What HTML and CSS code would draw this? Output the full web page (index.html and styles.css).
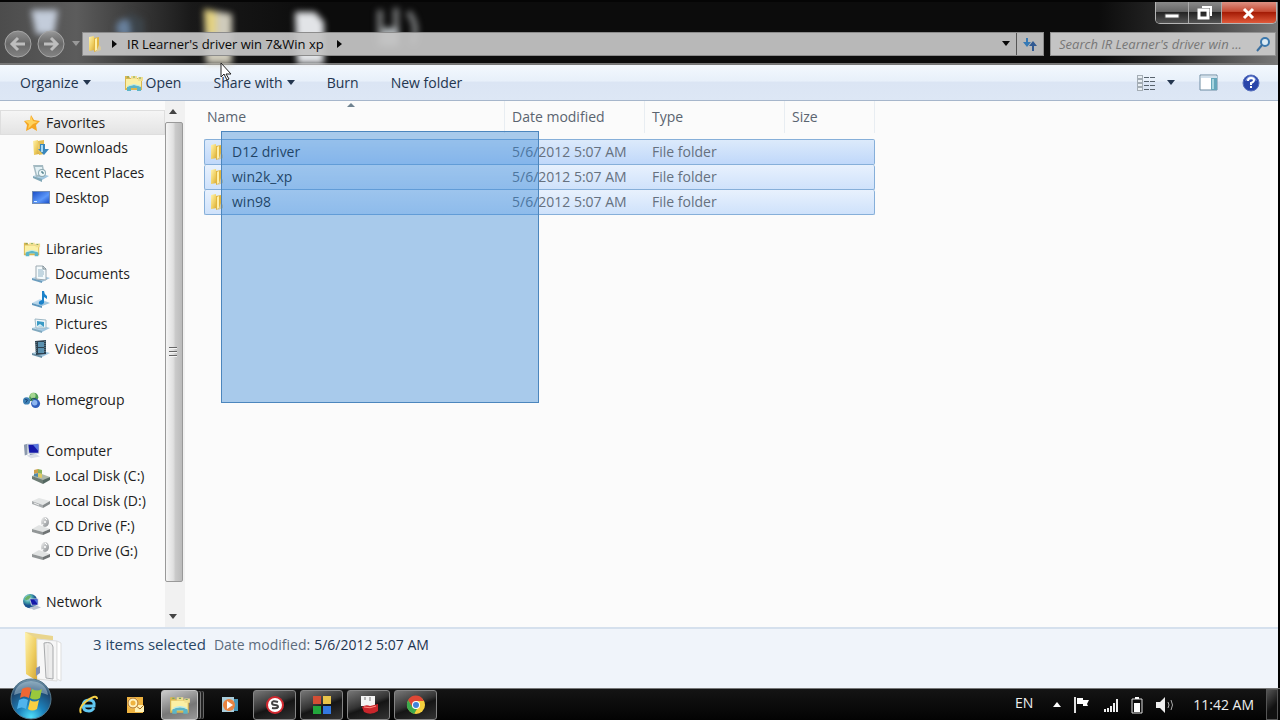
FILE: index.html
```
<!DOCTYPE html>
<html lang="en">
<head>
  <meta charset="UTF-8">
  <meta name="viewport" content="width=device-width, initial-scale=1.0">
  <title>IR Learner's driver win 7&amp;Win xp</title>
  <link rel="stylesheet" href="styles.css">
</head>
<body>
  <!-- Shared icons -->
  <svg class="sprite" aria-hidden="true">
    <defs>
      <linearGradient id="gold" x1="0" x2="1" y2="1"><stop offset="0" stop-color="#fff3b0"/><stop offset=".55" stop-color="#efcf62"/><stop offset="1" stop-color="#d2a537"/></linearGradient>
      <linearGradient id="base" x1="0" x2="1" y2="1"><stop offset="0" stop-color="#dceefa"/><stop offset="1" stop-color="#82b2d2"/></linearGradient>
      <linearGradient id="metal" x1="0" x2="1" y2="1"><stop offset="0" stop-color="#f2f2f2"/><stop offset="1" stop-color="#868a8d"/></linearGradient>
      <linearGradient id="screen" x1="0" x2="1" y2="1"><stop offset="0" stop-color="#1d50c8"/><stop offset=".6" stop-color="#5c98fa"/><stop offset="1" stop-color="#1d50c8"/></linearGradient>
      <linearGradient id="knob" x2="0" y2="1"><stop offset="0" stop-color="#9a9a9a"/><stop offset=".5" stop-color="#6c6c6c"/><stop offset="1" stop-color="#8c8c8c"/></linearGradient>
      <radialGradient id="globe" cx=".35" cy=".3"><stop offset="0" stop-color="#c8f0f5"/><stop offset=".6" stop-color="#45a3a9"/><stop offset="1" stop-color="#19528f"/></radialGradient>
      <radialGradient id="orb" cx=".5" cy=".95" r=".95"><stop offset="0" stop-color="#4fe0fb"/><stop offset=".35" stop-color="#1d83bd"/><stop offset=".75" stop-color="#1d456d"/><stop offset="1" stop-color="#7799ad"/></radialGradient>
    </defs>
    <symbol id="i-folder" viewBox="0 0 18 18">
      <path d="M3 2l5-1 1 14-6 1z" fill="url(#gold)"/>
      <path d="M8 3l5-1v13l-5 2z" fill="#e1b53f"/>
      <path d="M9 4l2-1v12l-2 1z" fill="#fff0a8"/>
      <path d="M13 10l2 2v3l-5 2z" fill="#d6c9a0"/>
    </symbol>
    <symbol id="i-star" viewBox="0 0 18 18">
      <path d="M8 1l3 5 6 1-4 4 1 6-5-3-6 3 1-6-3-4 6-1z" fill="#f5a623"/>
      <path d="M8 2l2 5 5 1-5 2-5 5 1-5-4-3 5-1z" fill="#ffd35e"/>
    </symbol>
    <symbol id="i-downloads" viewBox="0 0 18 18">
      <path d="M1 2l5-1 1 14-5 1z" fill="url(#gold)"/><path d="M6 2l6-1v14l-5 1z" fill="#e4bf55"/>
      <path d="M8 5h5v5h4l-5 6-6-6h2z" fill="#3a87bd"/><path d="M9 6h2v7H9z" fill="#a9dbf4"/>
    </symbol>
    <symbol id="i-recent" viewBox="0 0 18 18">
      <path d="M1 12l7-3 9 3-7 4z" fill="url(#base)"/><path d="M1 12l9 3v3l-9-4z" fill="#80a7b7"/>
      <path d="M1 1h10l2 11-9 1z" fill="#a4bac2"/><path d="M3 3h7l1 7-6 1z" fill="#e2f0f4"/>
      <circle cx="10" cy="9" r="4" fill="#8faab3"/><circle cx="10" cy="9" r="3" fill="#edf7f9"/><path d="M10 7v2h2" fill="none" stroke="#2c6574"/>
    </symbol>
    <symbol id="i-desktop" viewBox="0 0 18 18">
      <path d="M0 2h18v13H0z" fill="#718cb6"/><path d="M1 3h16v11H1z" fill="url(#screen)"/><path d="M2 12h3v1H2z" fill="#d7f0ff"/>
    </symbol>
    <symbol id="i-library" viewBox="0 0 20 18">
      <path d="M1 2h4l1 2h12v12H1z" fill="#d9b750"/><path d="M2 5h15v9H2z" fill="#fbf0a5"/>
      <path d="M7 2h6v3H7zM14 3h5v4h-5z" fill="#f1df91"/><path d="M3 3h2M9 3h2M15 4h2" stroke="#77a45f"/>
      <path d="M3 17v-4q7-4 14 0v4h-4v-3H7v3z" fill="#5bb5c8"/><path d="M4 12q6-3 12 0" fill="none" stroke="#b9ebee"/>
    </symbol>
    <symbol id="i-documents" viewBox="0 0 18 18">
      <path d="M0 13l8-3 10 3-8 4z" fill="url(#base)"/><path d="M0 13l10 3v2L0 15z" fill="#6c9dbe"/>
      <path d="M4 1h7l3 3v11l-10-1z" fill="#f4fafc" stroke="#9ca9b1"/><path d="M6 5h5M6 7h6M6 9h6M6 11h5" stroke="#92b3c5"/><path d="M11 1v3h3" fill="none" stroke="#75858d"/>
    </symbol>
    <symbol id="i-music" viewBox="0 0 18 18">
      <path d="M0 13l8-4 10 4-8 3z" fill="url(#base)"/><path d="M0 13l10 3v2L0 15z" fill="#5d96bc"/>
      <path d="M10 1h2q0 3 3 5v3l-3-2v6q-2 3-5 1-1-3 3-4z" fill="#1c82ca"/>
    </symbol>
    <symbol id="i-pictures" viewBox="0 0 18 18">
      <path d="M0 13l8-3 10 3-8 4z" fill="url(#base)"/><path d="M0 13l10 3v2L0 15z" fill="#80a8be"/>
      <path d="M3 4l11 1v8L4 13z" fill="#eef6fa" stroke="#9db8c5"/><path d="M5 6l7 1v5l-7-1z" fill="#3a9ac5"/><path d="M5 11l3-2 4 3z" fill="#d6edf5"/>
    </symbol>
    <symbol id="i-videos" viewBox="0 0 18 18">
      <path d="M0 13l8-3 10 3-8 4z" fill="url(#base)"/><path d="M0 13l10 3v2L0 15z" fill="#688ea4"/>
      <path d="M3 1l11-1v14l-10 1z" fill="#2c4150"/><path d="M6 2h6v5H6zM6 8h6v5H6z" fill="#5b91af"/><path d="M4 2v12M13 1v12" stroke="#7f979f" stroke-dasharray="1 1"/>
    </symbol>
    <symbol id="i-homegroup" viewBox="0 0 20 18">
      <circle cx="4" cy="10" r="4" fill="#3d80b5"/><circle cx="12" cy="6" r="5" fill="#4e9c55"/><circle cx="14" cy="13" r="5" fill="#315fbc"/>
      <circle cx="11" cy="4" r="3" fill="#a5d690"/><circle cx="13" cy="12" r="3" fill="#8db6f0"/><path d="M2 8l3 1-2 3M8 10l3-3 4 1" fill="none" stroke="#183c6c" stroke-width="1"/>
    </symbol>
    <symbol id="i-computer" viewBox="0 0 20 18">
      <path d="M1 2l4-1v12l-3 1z" fill="#8b99ad"/><path d="M5 1h13v11H6z" fill="#c0cadb"/><path d="M6 2h11v9H7z" fill="#1519a9"/><path d="M11 2l6-1v8z" fill="#5878df"/><path d="M8 12h5l2 2H7z" fill="#7b89a8"/><path d="M4 14l10-2 5 3-10 2z" fill="#d8dde6"/>
    </symbol>
    <symbol id="i-disk" viewBox="0 0 18 18">
      <path d="M0 9l7-3 11 3-7 4z" fill="#e4e6e6"/><path d="M0 9l11 4v3L0 12z" fill="#a9adaf"/><path d="M11 13l7-4v3l-7 4z" fill="#858a8b"/><path d="M2 11l5 2" stroke="#eee"/>
    </symbol>
    <symbol id="i-system" viewBox="0 0 18 18">
      <path d="M0 9l7-3 11 4-7 4z" fill="#adb8aa"/><path d="M0 9l11 4v4L0 12z" fill="#6d7c74"/><path d="M11 13l7-3v3l-7 4z" fill="#536760"/>
      <path d="M2 3l4-1v4L2 7z" fill="#cf9f4b"/><path d="M6 2l4 1v4L6 6z" fill="#8ab35e"/><path d="M2 7l4-1v4L2 9z" fill="#5289a7"/><path d="M6 6l4 1v4l-4-1z" fill="#dfcb61"/>
    </symbol>
    <symbol id="i-cd" viewBox="0 0 18 18">
      <path d="M0 12l7-4 11 4-7 3z" fill="#e1e3e3"/><path d="M0 12l11 3v3L0 15z" fill="#929697"/><path d="M11 15l7-3v3l-7 3z" fill="#6f7374"/>
      <ellipse cx="13" cy="5" rx="4" ry="5" fill="url(#metal)"/><circle cx="13" cy="5" r="1" fill="#fff"/><path d="M13 1l2 2M11 7l-1 2" stroke="#fff"/>
    </symbol>
    <symbol id="i-network" viewBox="0 0 20 18">
      <circle cx="8" cy="8" r="8" fill="url(#globe)"/><path d="M2 5q4-5 7-3l-2 4-4 1z" fill="#69b167"/><path d="M7 5h10v8H9z" fill="#c2cbe0"/><path d="M8 6h8v6h-6z" fill="#1519a9"/><path d="M12 6h4v5z" fill="#4f72d8"/><path d="M7 15l8-2 5 2-8 3z" fill="#b9c2d1"/>
    </symbol>
    <symbol id="i-down" viewBox="0 0 8 5"><path d="M0 0h8L4 5z" fill="currentColor"/></symbol>
    <symbol id="i-right" viewBox="0 0 5 8"><path d="M0 0v8l5-4z" fill="currentColor"/></symbol>
  </svg>

  <div class="window">
    <header class="titlebar">
      <svg class="glass" viewBox="0 0 480 62" aria-hidden="true">
        <path d="M31 8h27l-4 24H36z" fill="#c3ccda"/>
        <circle cx="125" cy="26" r="9" fill="#68809c"/><path d="M128 10l16 8v18h-12z" fill="#3c444a"/>
        <path d="M204 7l28 5v50h-26z" fill="#cfcbbb"/><path d="M204 7l12 3v24l-10-3z" fill="#e3d17f"/>
        <path d="M295 10h20l9 10v42h-27z" fill="#e2e4e7"/>
        <path d="M380 8v36M396 6v36M408 10q12 14 4 32" fill="none" stroke="#757778" stroke-width="6"/><path d="M382 26h16v18h-16z" fill="#b5bbbe"/>
      </svg>
      <div class="caption">
        <button class="cap" aria-label="Minimize"><svg width="16" height="16"><path d="M1 9h14v4H1z" fill="#fff" stroke="#555"/></svg></button>
        <button class="cap" aria-label="Restore"><svg width="18" height="18"><path d="M6 3h9v9" fill="none" stroke="#fff" stroke-width="2"/><path d="M3 6h9v8H3z" fill="none" stroke="#fff" stroke-width="3"/></svg></button>
        <button class="cap close" aria-label="Close"><svg width="16" height="16"><path d="M3 4l9 9M12 4l-9 9" stroke="#fff" stroke-width="3"/></svg></button>
      </div>
      <div class="navrow">
        <button class="round" aria-label="Back"><svg width="28" height="28"><circle cx="14" cy="14" r="13" fill="url(#knob)" fill-opacity=".85" stroke="#a5a5a5"/><path d="M21 14H9M14 8l-6 6 6 6" fill="none" stroke="#bdbdbd" stroke-width="3"/></svg></button>
        <button class="round" aria-label="Forward"><svg width="28" height="28"><circle cx="14" cy="14" r="13" fill="url(#knob)" fill-opacity=".85" stroke="#a5a5a5"/><path d="M7 14h12M14 8l6 6-6 6" fill="none" stroke="#bdbdbd" stroke-width="3"/></svg></button>
        <button class="history" aria-label="Recent pages"><svg width="8" height="5"><use href="#i-down"/></svg></button>
        <div class="address">
          <svg width="20" height="18"><use href="#i-folder"/></svg>
          <svg width="5" height="8"><use href="#i-right"/></svg>
          <button class="crumb">IR Learner's driver win 7&amp;Win xp</button>
          <svg width="5" height="8"><use href="#i-right"/></svg>
          <button class="drop" aria-label="Previous locations"><svg width="8" height="5"><use href="#i-down"/></svg></button>
          <button class="refresh" aria-label="Refresh"><svg width="16" height="16"><path d="M6 2H4v4H1l4 5 4-5H6z" fill="#3579b5"/><path d="M10 15h2v-5h3l-4-5-4 5h3z" fill="#315a92"/></svg></button>
        </div>
        <div class="search">
          <input type="text" aria-label="Search" placeholder="Search IR Learner's driver win ...">
          <svg width="16" height="16"><circle cx="10" cy="6" r="4" fill="#dcebf4" stroke="#3b78ad" stroke-width="2"/><path d="M7 9l-5 6" stroke="#3b6f9f" stroke-width="2"/></svg>
        </div>
      </div>
    </header>

    <div class="toolbar">
      <button class="tool organize">Organize <svg width="8" height="5"><use href="#i-down"/></svg></button>
      <button class="tool open"><svg width="20" height="18"><use href="#i-library"/></svg>Open</button>
      <button class="tool share">Share with <svg width="8" height="5"><use href="#i-down"/></svg></button>
      <button class="tool burn">Burn</button>
      <button class="tool">New folder</button>
      <div class="tool-right">
        <button class="tool views" aria-label="Change your view">
          <svg width="18" height="16" viewBox="0 0 18 16"><path d="M0 0h6v16H0z" fill="#a4adb5"/><path d="M1 1h4v2H1zM1 5h4v2H1zM1 9h4v2H1zM1 13h4v2H1z" fill="#e9eff4"/><path d="M7 2h5v1H7zM13 2h5v1h-5zM7 6h5v1H7zM13 6h5v1h-5zM7 10h5v1H7zM13 10h5v1h-5zM7 14h5v1H7zM13 14h5v1h-5z" fill="#59646e"/></svg>
          <svg width="8" height="5"><use href="#i-down"/></svg>
        </button>
        <button class="tool" aria-label="Preview pane"><svg width="19" height="17"><path d="M1 1h17v15H1z" fill="#fff" stroke="#6d8ba2"/><path d="M2 2h16v2H2z" fill="#d2e1ed"/><path d="M12 4h6v12h-6z" fill="#66a7bb"/><path d="M13 5h2v10h-2z" fill="#a7d5df"/></svg></button>
        <button class="tool" aria-label="Help"><svg width="18" height="18"><circle cx="9" cy="9" r="8" fill="#2945aa" stroke="#5770bd"/><path d="M3 7q2-5 6-5t6 5q-6-3-12 0" fill="#7d94dc"/><path d="M6 7q0-3 3-3t3 2q0 2-3 3v2M9 12v2" fill="none" stroke="#fff" stroke-width="2"/></svg></button>
      </div>
    </div>

    <main class="content">
      <nav class="tree">
        <ul>
          <li><a href="#" class="root current"><svg width="18" height="18"><use href="#i-star"/></svg>Favorites</a></li>
          <li><a href="#"><svg width="18" height="18"><use href="#i-downloads"/></svg>Downloads</a></li>
          <li><a href="#"><svg width="18" height="18"><use href="#i-recent"/></svg>Recent Places</a></li>
          <li><a href="#"><svg width="18" height="18"><use href="#i-desktop"/></svg>Desktop</a></li>
        </ul>
        <ul>
          <li><a href="#" class="root"><svg width="18" height="18"><use href="#i-library"/></svg>Libraries</a></li>
          <li><a href="#"><svg width="18" height="18"><use href="#i-documents"/></svg>Documents</a></li>
          <li><a href="#"><svg width="18" height="18"><use href="#i-music"/></svg>Music</a></li>
          <li><a href="#"><svg width="18" height="18"><use href="#i-pictures"/></svg>Pictures</a></li>
          <li><a href="#"><svg width="18" height="18"><use href="#i-videos"/></svg>Videos</a></li>
        </ul>
        <ul>
          <li><a href="#" class="root"><svg width="18" height="18"><use href="#i-homegroup"/></svg>Homegroup</a></li>
        </ul>
        <ul>
          <li><a href="#" class="root"><svg width="18" height="18"><use href="#i-computer"/></svg>Computer</a></li>
          <li><a href="#"><svg width="18" height="18"><use href="#i-system"/></svg>Local Disk (C:)</a></li>
          <li><a href="#"><svg width="18" height="18"><use href="#i-disk"/></svg>Local Disk (D:)</a></li>
          <li><a href="#"><svg width="18" height="18"><use href="#i-cd"/></svg>CD Drive (F:)</a></li>
          <li><a href="#"><svg width="18" height="18"><use href="#i-cd"/></svg>CD Drive (G:)</a></li>
        </ul>
        <ul>
          <li><a href="#" class="root"><svg width="18" height="18"><use href="#i-network"/></svg>Network</a></li>
        </ul>
      </nav>
      <div class="scrollbar">
        <button class="arrow" aria-label="Scroll up"><svg width="8" height="5"><path d="M0 5h8L4 0z" fill="#444"/></svg></button>
        <div class="thumb"><svg width="8" height="10" viewBox="0 0 8 10"><path d="M0 0h8v1H0zM0 4h8v1H0zM0 8h8v1H0z" fill="#666"/><path d="M0 1h8v1H0zM0 5h8v1H0zM0 9h8v1H0z" fill="#f4f4f4"/></svg></div>
        <button class="arrow" aria-label="Scroll down"><svg width="8" height="5"><use href="#i-down"/></svg></button>
      </div>
      <section class="files">
        <table>
          <colgroup><col class="c-name"><col class="c-date"><col class="c-type"><col class="c-size"></colgroup>
          <thead>
            <tr><th><svg class="sort" width="8" height="5"><path d="M0 5l4-4 4 4z" fill="#6f8290"/></svg>Name</th><th>Date modified</th><th>Type</th><th>Size</th></tr>
          </thead>
          <tbody>
            <tr><td><div class="name"><svg width="18" height="18"><use href="#i-folder"/></svg>D12 driver</div></td><td>5/6/2012 5:07 AM</td><td>File folder</td><td></td></tr>
            <tr><td><div class="name"><svg width="18" height="18"><use href="#i-folder"/></svg>win2k_xp</div></td><td>5/6/2012 5:07 AM</td><td>File folder</td><td></td></tr>
            <tr><td><div class="name"><svg width="18" height="18"><use href="#i-folder"/></svg>win98</div></td><td>5/6/2012 5:07 AM</td><td>File folder</td><td></td></tr>
          </tbody>
        </table>
        <div class="marquee"></div>
      </section>
    </main>

    <footer class="details">
      <svg width="42" height="54" viewBox="0 0 42 54">
        <path d="M3 3l28 4v41l-18 4z" fill="#e9d58e"/><path d="M15 10l20 2v40l-20-2z" fill="#f7f7f7" stroke="#ddd"/>
        <path d="M22 14q8-2 9 4v32l-7-1z" fill="#ececec" stroke="#a8aaac"/><path d="M26 16v32M35 12l4 2v38l-4-2z" fill="#fff" stroke="#ddd"/>
        <path d="M3 3l11 6 1 43-11-7z" fill="url(#gold)"/><path d="M14 39l4-2v7l-4 3z" fill="#8190b4"/>
      </svg>
      <span class="count">3 items selected</span>
      <span class="label">Date modified:</span>
      <span>5/6/2012 5:07 AM</span>
    </footer>
  </div>

  <div class="taskbar">
    <button class="start" aria-label="Start">
      <svg width="42" height="42" viewBox="0 0 42 42">
        <circle cx="21" cy="21" r="20" fill="url(#orb)" stroke="#53768a"/><path d="M4 17Q6 4 21 3q15 1 17 14-16-7-34 0" fill="#c4dce6" fill-opacity=".45"/>
        <path d="M12 11q5-3 9-1l-2 10q-5-3-9 0z" fill="#ee6733"/><path d="M22 11q5 3 10 0l-2 9q-5 3-10 0z" fill="#9ac83b"/><path d="M9 22q5-3 9 0l-2 9q-4-3-9 0z" fill="#50b4ec"/><path d="M20 22q4 3 9 0l-2 9q-5 3-9 0z" fill="#f9cf42"/>
      </svg>
    </button>
    <button class="pin" aria-label="Internet Explorer"><svg width="20" height="20" viewBox="0 0 20 20"><path d="M5 11h10q1-6-5-6-5 0-6 5 0 6 6 6 3 0 5-3" fill="none" stroke="#60c7f1" stroke-width="3"/><path d="M2 18Q-1 12 9 5q9-6 9-1" fill="none" stroke="#f5ce46" stroke-width="2"/></svg></button>
    <button class="pin" aria-label="Outlook"><svg width="20" height="20" viewBox="0 0 20 20"><path d="M2 2h16v16H2z" fill="#efb340"/><path d="M10 10h9v7h-9z" fill="#fff1b4"/><path d="M10 10l5 4 4-4" fill="none" stroke="#a96919"/><circle cx="8" cy="8" r="4" fill="none" stroke="#fff2be" stroke-width="3"/><circle cx="8" cy="8" r="5" fill="none" stroke="#ad6919"/></svg></button>
    <button class="task stack" aria-label="Windows Explorer"><svg width="22" height="20"><use href="#i-library"/></svg></button>
    <button class="pin" aria-label="Media Player"><svg width="18" height="18" viewBox="0 0 18 18"><path d="M1 1h12v15H1z" fill="#a9cddb"/><path d="M13 3h4v12h-4z" fill="#4a97b8"/><circle cx="8" cy="9" r="6" fill="#e98340"/><path d="M6 5v8l6-4z" fill="#fff"/></svg></button>
    <button class="task" aria-label="Recorder"><svg width="20" height="20" viewBox="0 0 20 20"><circle cx="10" cy="10" r="9" fill="#d2282f"/><circle cx="10" cy="10" r="7" fill="#fff"/><path d="M13 7q-6-2-6 1 0 2 3 2t3 2q-1 2-6 1" fill="none" stroke="#444" stroke-width="2"/></svg></button>
    <button class="task" aria-label="Tiles"><svg width="20" height="20" viewBox="0 0 20 20"><path d="M1 1h8v8H1z" fill="#d34e35"/><path d="M11 1h8v8h-8z" fill="#e8c44a"/><path d="M1 11h8v8H1z" fill="#22a63c"/><path d="M11 11h8v8h-8z" fill="#3378e0"/></svg></button>
    <button class="task" aria-label="Toolbox"><svg width="20" height="20" viewBox="0 0 20 20"><path d="M2 1h14v10H2z" fill="#f4f4f4"/><path d="M6 2v3M11 2v4" stroke="#777"/><path d="M3 12q4-3 8-1l8-2v7q-7 5-14 1z" fill="#c9252b"/><path d="M5 12q6 2 12-1" fill="none" stroke="#ff8c80"/></svg></button>
    <button class="task" aria-label="Chrome"><svg width="20" height="20" viewBox="0 0 20 20"><circle cx="10" cy="10" r="9" fill="#f4cf3d"/><path d="M2 5q5-7 13-3l3 4h-8l-4 6z" fill="#df4735"/><path d="M2 5l5 8 4 1-3 5Q-2 15 2 5z" fill="#3daa4d"/><circle cx="10" cy="10" r="4" fill="#fff"/><circle cx="10" cy="10" r="3" fill="#3f83da"/></svg></button>

    <div class="tray">
      <span class="lang">EN</span>
      <button aria-label="Show hidden icons"><svg width="8" height="5"><path d="M0 5h8L4 0z" fill="#fff"/></svg></button>
      <svg width="18" height="18"><path d="M2 1v16" stroke="#ddd" stroke-width="2"/><path d="M4 2h6v2h6l-2 4 1 2h-5V8H4z" fill="#fff"/></svg>
      <svg width="16" height="16"><path d="M2 15v-3M5 15v-4M8 15V9M11 15V6M14 15V2" stroke="#eee" stroke-width="2"/></svg>
      <svg width="12" height="18"><path d="M1 3h10v14H1z" fill="none" stroke="#ddd"/><path d="M4 1h4v2H4zM3 7h6v9H3z" fill="#fff"/></svg>
      <svg width="20" height="18"><path d="M1 6h4l5-5v16l-5-5H1z" fill="#eee"/><path d="M13 6q2 3 0 6M16 4q3 5 0 10" fill="none" stroke="#aaa"/></svg>
      <time>11:42 AM</time>
      <button class="peek" aria-label="Show desktop"></button>
    </div>
  </div>

  <svg class="cursor" width="12" height="19" viewBox="0 0 12 19" aria-hidden="true"><path d="M1 1v14l3-3 3 6 2-1-3-5h5z" fill="#fff" stroke="#222"/></svg>
</body>
</html>
```
FILE: styles.css
```
* {
  box-sizing: border-box;
}
body {
  margin: 0;
  height: 100vh;
  display: flex;
  flex-direction: column;
  overflow: hidden;
  background: #000;
  color: #1e1e1e;
  font-family: "Open Sans", "Noto Sans", sans-serif;
  font-size: 14px;
  line-height: 20px;
}
button {
  display: flex;
  align-items: center;
  justify-content: center;
  padding: 0;
  border: 0;
  background: none;
  color: inherit;
  font: inherit;
}
svg {
  flex-shrink: 0;
}
.sprite {
  position: absolute;
  width: 0;
  height: 0;
}
.window {
  flex: 1;
  min-height: 0;
  display: flex;
  flex-direction: column;
  margin-right: 2px;
}

/* Title bar */
.titlebar {
  position: relative;
  display: flex;
  flex-direction: column;
  height: 65px;
  background: linear-gradient(90deg, #4c4c4c, #5c5c5c 6%, #191919 15%, #0c0c0c 25%, #0c0c0c 86%, #262626 91%, #777);
  border-top: 2px solid #050505;
  border-bottom: 2px solid #777;
}
.glass {
  position: absolute;
  top: 0;
  left: 0;
  width: 480px;
  height: 62px;
  filter: blur(3px);
}
.caption {
  position: relative;
  align-self: flex-end;
  display: flex;
  height: 22px;
  margin-right: 1px;
  border: 1px solid #b5b5b5;
  border-top: 0;
  border-radius: 0 0 5px 5px;
  overflow: hidden;
}
.cap {
  width: 33px;
  background: linear-gradient(#8a8a8a, #666 45%, #242424 50%, #555);
  border-right: 1px solid #aaa;
}
.close {
  width: 54px;
  border-right: 0;
  background: linear-gradient(#dc9183, #c64b34 45%, #a51c06 50%, #e0593a);
}
.navrow {
  position: relative;
  flex: 1;
  display: flex;
  align-items: center;
  padding: 0 2px 0 4px;
}
.round {
  margin-right: 5px;
}
.history {
  width: 12px;
  color: #999;
}
.address {
  flex: 1;
  display: flex;
  align-items: center;
  height: 24px;
  padding-left: 2px;
  background: rgba(195, 195, 195, 0.94);
  border: 1px solid #8c8c8c;
  color: #080808;
  font-size: 13px;
}
.address svg + svg {
  margin-left: 7px;
}
.crumb {
  margin: 0 13px 0 10px;
}
.drop {
  margin-left: auto;
  width: 20px;
  height: 22px;
}
.refresh {
  width: 27px;
  height: 22px;
  border-left: 1px solid #555;
}
.search {
  display: flex;
  align-items: center;
  width: 226px;
  height: 24px;
  margin-left: 6px;
  padding: 0 4px 0 8px;
  background: #c4c4c4;
  border: 1px solid #929292;
  font-size: 13px;
}
.search input {
  flex: 1;
  min-width: 0;
  padding: 0;
  border: 0;
  outline: none;
  background: none;
  font: inherit;
  font-style: italic;
}
.search input::placeholder {
  color: #777;
}

/* Command bar */
.toolbar {
  display: flex;
  align-items: center;
  height: 36px;
  padding: 0 18px 0 20px;
  background: linear-gradient(#f3f8fe, #e8f0fa 45%, #dbe5f4 50%, #dde7f5);
  border-bottom: 1px solid #a6b6cb;
  color: #24364f;
}
.tool svg + svg,
.organize svg,
.share svg {
  margin-left: 4px;
}
.organize {
  margin-right: 33px;
}
.open {
  gap: 2px;
  margin-right: 32px;
}
.share {
  margin-right: 32px;
}
.burn {
  margin-right: 32px;
}
.tool-right {
  display: flex;
  align-items: center;
  gap: 24px;
  margin-left: auto;
}
.views svg + svg {
  margin-left: 12px;
}

/* Navigation pane */
.content {
  flex: 1;
  min-height: 0;
  display: flex;
  background: #fbfbfb;
}
.tree {
  width: 165px;
  padding-top: 9px;
  overflow: hidden;
}
.tree ul {
  margin: 0 0 26px;
  padding: 0;
  list-style: none;
}
.tree a {
  display: flex;
  align-items: center;
  gap: 5px;
  height: 25px;
  padding-left: 32px;
  color: inherit;
  text-decoration: none;
  white-space: nowrap;
}
.tree .root {
  padding-left: 23px;
}
.tree .current {
  background: linear-gradient(#f6f6f6, #e3e3e3);
  box-shadow: inset 0 0 0 1px #dedede;
}
.scrollbar {
  display: flex;
  flex-direction: column;
  width: 20px;
  padding-right: 2px;
  background: #f1f1f1;
}
.arrow {
  height: 21px;
  width: 16px;
  color: #444;
}
.thumb {
  flex: 1;
  display: flex;
  align-items: center;
  justify-content: center;
  margin-bottom: 24px;
  padding-right: 3px;
  border: 1px solid #999;
  border-radius: 2px;
  background: linear-gradient(90deg, #f5f5f5, #e0e0e0 45%, #c9c9c9 60%, #bbb);
}

/* File list */
.files {
  position: relative;
  flex: 1;
  padding-left: 19px;
}
table {
  width: 671px;
  table-layout: fixed;
  border-collapse: separate;
  border-spacing: 0;
}
.c-name {
  width: 301px;
}
.c-date,
.c-type {
  width: 140px;
}
th {
  position: relative;
  height: 32px;
  padding: 0 0 0 7px;
  border-right: 1px solid #e8edf2;
  color: #5a6470;
  font-weight: normal;
  text-align: left;
}
th:first-child {
  padding-left: 3px;
}
.sort {
  position: absolute;
  top: 1px;
  left: 143px;
}
tbody::before {
  content: "";
  display: block;
  height: 6px;
}
td {
  height: 25px;
  padding: 0 0 0 7px;
  border-bottom: 1px solid #86afd9;
  background: linear-gradient(#e8f1fd, #cfe2fb);
  color: #66717f;
}
tbody tr:first-child td {
  height: 26px;
  border-top: 1px solid #86afd9;
  background: linear-gradient(#dceafb, #c0d8fa);
}
td:first-child {
  padding-left: 3px;
  border-left: 1px solid #86afd9;
  border-radius: 2px 0 0 2px;
  color: #1e1e1e;
}
td:last-child {
  border-right: 1px solid #86afd9;
  border-radius: 0 2px 2px 0;
}
.name {
  display: flex;
  align-items: center;
  gap: 6px;
}
.marquee {
  position: absolute;
  top: 30px;
  left: 36px;
  width: 318px;
  height: 272px;
  background: rgba(38, 125, 212, 0.39);
  border: 1px solid #4c86bd;
}

/* Details pane */
.details {
  display: flex;
  align-items: flex-start;
  height: 61px;
  padding: 0 22px;
  background: #f0f4fa;
  border-top: 2px solid #d5e0ed;
  color: #1e3450;
  line-height: 32px;
}
.count {
  margin: 0 8px 0 29px;
  color: #294766;
  font-size: 15px;
  line-height: 30px;
}
.label {
  margin-right: 4px;
  color: #5d6c7d;
}

/* Taskbar */
.taskbar {
  display: flex;
  align-items: center;
  height: 32px;
  padding: 0 2px 0 10px;
  background: linear-gradient(#141414, #030303);
  border-top: 1px solid #777;
  color: #eee;
}
.start {
  z-index: 1;
  align-items: flex-end;
  width: 42px;
  height: 30px;
  margin-right: 14px;
}
.pin {
  width: 46px;
  height: 30px;
}
.task {
  width: 43px;
  height: 30px;
  margin-right: 4px;
  border: 1px solid #858585;
  border-radius: 3px;
  background: linear-gradient(160deg, #777, #333 45%, #151515 55%, #333);
}
.stack {
  width: 37px;
  margin-right: 9px;
  margin-left: 3px;
  border-color: #c2c2c2;
  background: linear-gradient(160deg, #ccc, #777 60%, #999);
  box-shadow: 3px 0 0 -1px #222, 4px 0 0 -1px #777, 6px 0 0 -1px #222, 7px 0 0 -1px #666;
}
.tray {
  display: flex;
  align-items: center;
  gap: 12px;
  height: 31px;
  margin-left: auto;
}
.lang {
  margin-right: 8px;
  align-self: flex-start;
  line-height: 28px;
}
.tray time {
  margin-left: 6px;
}
.peek {
  width: 12px;
  height: 31px;
  border: 1px solid #555;
  background: linear-gradient(135deg, #555, #111 60%);
}
.cursor {
  position: absolute;
  top: 62px;
  left: 220px;
}
```
